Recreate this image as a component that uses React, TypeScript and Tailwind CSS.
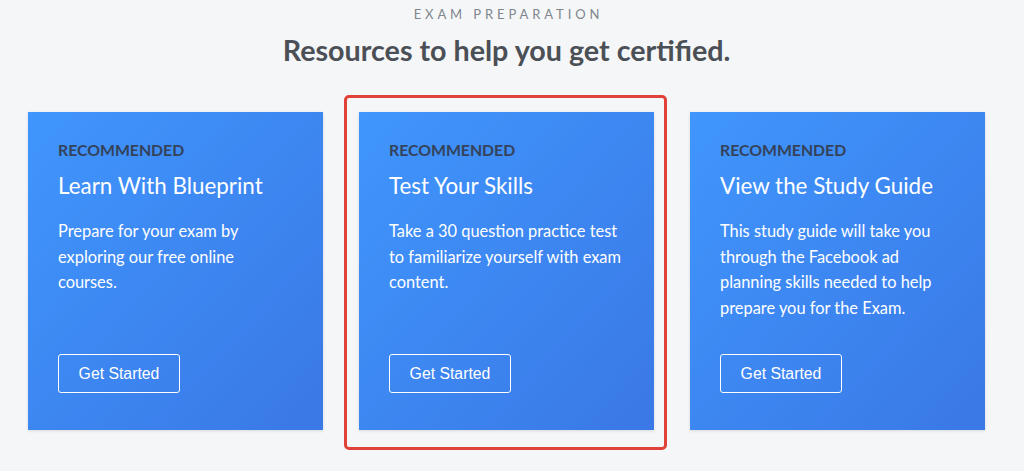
import React from "react";

const cards = [
  {
    title: "Learn With Blueprint",
    desc: "Prepare for your exam by exploring our free online courses.",
  },
  {
    title: "Test Your Skills",
    desc: "Take a 30 question practice test to familiarize yourself with exam content.",
  },
  {
    title: "View the Study Guide",
    desc: "This study guide will take you through the Facebook ad planning skills needed to help prepare you for the Exam.",
  },
];

export default function App() {
  return (
    <div
      className="w-[1024px] h-[471px] bg-[#f5f6f7] overflow-hidden"
      style={{ fontFamily: "Lato, 'Open Sans', sans-serif" }}
    >
      <div className="w-[957px] ml-[28px] flex flex-col items-center pt-[6px]">
        <div className="text-[13px] tracking-[0.3em] text-[#80868f] leading-[16px] pl-[4px]">
          EXAM PREPARATION
        </div>
        <h1 className="mt-[11px] text-[28.7px] font-bold text-[#4b4f56] leading-[34px]">
          Resources to help you get certified.
        </h1>
      </div>
      <div className="flex gap-[36px] pl-[28px] mt-[45px]">
        {cards.map((c, i) => (
          <div key={i} className="relative">
            <div className="w-[295px] h-[318px] bg-gradient-to-br from-[#4096fd] to-[#3a78e6] shadow-[0_1px_3px_rgba(0,0,0,0.12)] flex flex-col pl-[30px] pr-[28px] pt-[28px] pb-[37px]">
              <div className="text-[15.8px] font-bold text-[#34425a] leading-[19px]">
                RECOMMENDED
              </div>
              <div className="mt-[13px] text-[22.4px] text-white leading-[27px]">
                {c.title}
              </div>
              <p className="mt-[19px] text-[16.4px] text-white leading-[25.5px]">
                {c.desc}
              </p>
              <button
                className="mt-auto w-[122px] h-[39px] border-[1.5px] border-white rounded-[3px] text-white text-[15.8px]"
                style={{ fontFamily: "'Liberation Sans', Arial, sans-serif" }}
              >
                Get Started
              </button>
            </div>
            {i === 1 && (
              <div className="absolute left-[-15px] top-[-17px] w-[323px] h-[355px] border-[3px] border-[#e0423a] rounded-[5px] pointer-events-none" />
            )}
          </div>
        ))}
      </div>
    </div>
  );
}
